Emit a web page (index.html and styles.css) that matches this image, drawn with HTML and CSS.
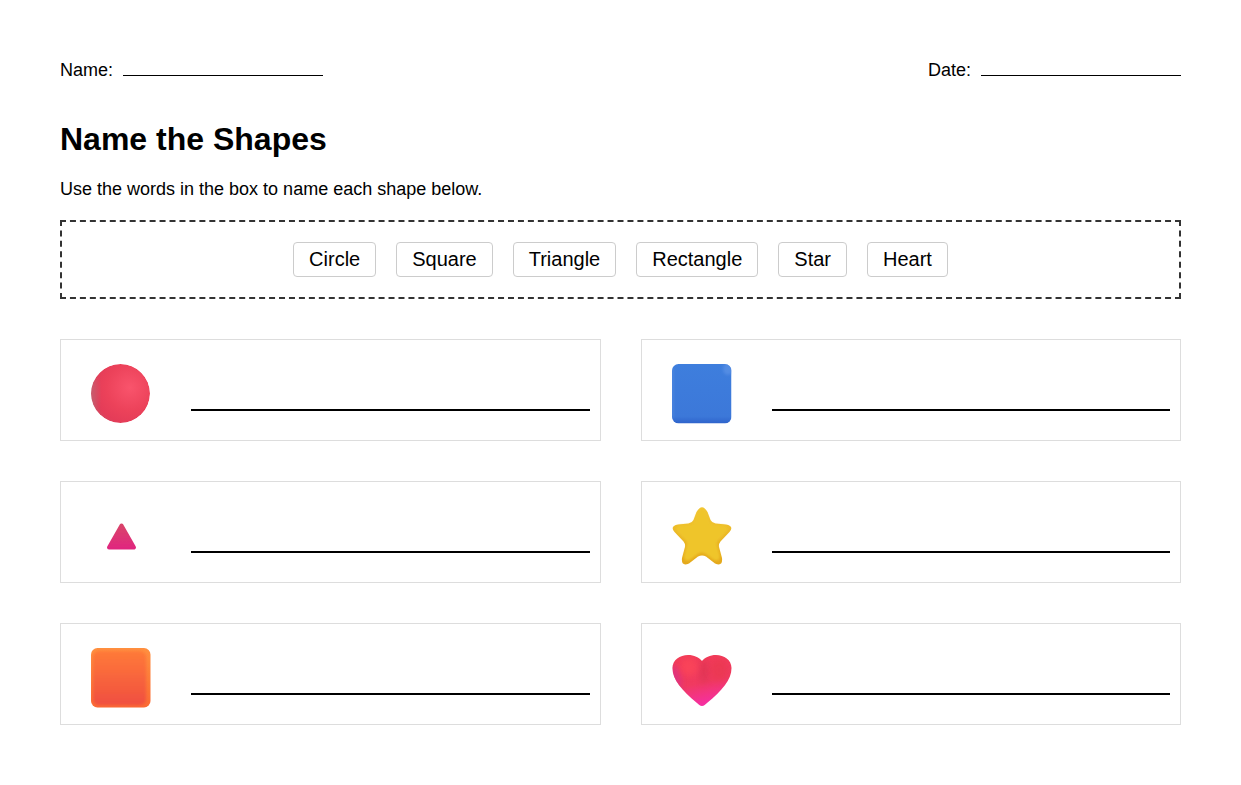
FILE: index.html
```html
<!DOCTYPE html>
<html lang="en">
<head>
<meta charset="utf-8">
<title>Name the Shapes</title>
<link rel="stylesheet" href="styles.css">
</head>
<body>
<svg class="defs" width="0" height="0" aria-hidden="true">
  <defs>
    <filter id="soft" x="-20%" y="-20%" width="140%" height="140%"><feGaussianBlur stdDeviation="0.4"/></filter>
    <filter id="soft2" x="-20%" y="-20%" width="140%" height="140%"><feGaussianBlur stdDeviation="1"/></filter>
    <filter id="blur3" x="-40%" y="-40%" width="180%" height="180%"><feGaussianBlur stdDeviation="3"/></filter>
    <filter id="blur1" x="-30%" y="-30%" width="160%" height="160%"><feGaussianBlur stdDeviation="1.5"/></filter>
    <radialGradient id="ball" cx="0.66" cy="0.4" r="0.72">
      <stop offset="0" stop-color="#f9546c"/>
      <stop offset="0.55" stop-color="#ec425a"/>
      <stop offset="0.85" stop-color="#e43c58"/>
      <stop offset="1" stop-color="#d24a62"/>
    </radialGradient>
    <linearGradient id="blue" x1="0" y1="0" x2="0" y2="1">
      <stop offset="0" stop-color="#3e7edd"/>
      <stop offset="0.88" stop-color="#3c78d9"/>
      <stop offset="1" stop-color="#2e63cb"/>
    </linearGradient>
    <linearGradient id="tri" x1="0" y1="0" x2="0" y2="1">
      <stop offset="0" stop-color="#d9436a"/>
      <stop offset="1" stop-color="#e0287e"/>
    </linearGradient>
    <linearGradient id="starEdge" x1="0" y1="0" x2="0" y2="1">
      <stop offset="0" stop-color="#f2c634"/>
      <stop offset="1" stop-color="#e4a81a"/>
    </linearGradient>
    <linearGradient id="orange" x1="0" y1="0" x2="0" y2="1">
      <stop offset="0" stop-color="#ff9040"/>
      <stop offset="1" stop-color="#fb6a34"/>
    </linearGradient>
    <linearGradient id="orangeIn" x1="0" y1="0" x2="0" y2="1">
      <stop offset="0" stop-color="#ff7a38"/>
      <stop offset="1" stop-color="#f04e40"/>
    </linearGradient>
    <linearGradient id="heart" x1="0.3" y1="0" x2="0.55" y2="1">
      <stop offset="0" stop-color="#f23c58"/>
      <stop offset="0.55" stop-color="#f03a60"/>
      <stop offset="1" stop-color="#f62ea6"/>
    </linearGradient>
    <path id="heartShape" d="M30 58C28 58 26.500 56.500 25 55C10 42.500 0.500 32 0.500 20C0.500 12 8 7 16 7C22 7 27 9.500 30 13C33 9.500 38 7 44 7C52 7 59.500 12 59.500 20C59.500 32 50 42.500 35 55C33.500 56.500 32 58 30 58Z"/>
    <path id="starShape" d="M24.500 6Q30 -3.500 35.500 6L38.500 14Q40 17 43.500 17.500L54 18.500Q62.500 20 57.500 26L48.500 35.500Q46.500 38 47 41L50 52Q51 61 43 57.500L34 50.500Q30 48.500 26 50.500L17 57.500Q9 61 10 52L13 41Q13.500 38 11.500 35.500L2.500 26Q-2.500 20 6 18.500L16.500 17.500Q20 17 21.500 14Z"/>
    <clipPath id="heartClip"><use href="#heartShape"/></clipPath>
    <clipPath id="blueClip"><rect width="59.500" height="59.500" rx="6.500"/></clipPath>
    <clipPath id="ballClip"><circle cx="29.500" cy="29.500" r="29.500"/></clipPath>
  </defs>
</svg>

<main class="sheet">
  <header class="meta">
    <div class="field"><span>Name:</span><span class="blank"></span></div>
    <div class="field"><span>Date:</span><span class="blank"></span></div>
  </header>

  <h1 class="title">Name the Shapes</h1>
  <p class="lead">Use the words in the box to name each shape below.</p>

  <ul class="bank">
    <li class="chip">Circle</li>
    <li class="chip">Square</li>
    <li class="chip">Triangle</li>
    <li class="chip">Rectangle</li>
    <li class="chip">Star</li>
    <li class="chip">Heart</li>
  </ul>

  <section class="grid">
    <article class="card">
      <svg class="shape" viewBox="0 0 60 60" aria-label="Red circle" role="img">
        <g clip-path="url(#ballClip)">
          <circle cx="29.500" cy="29.500" r="29.500" fill="url(#ball)"/>
          <ellipse cx="1" cy="30" rx="5" ry="20" fill="#b8707c" opacity="0.6" filter="url(#blur3)"/>
        </g>
      </svg>
      <span class="answer"></span>
    </article>

    <article class="card">
      <svg class="shape" viewBox="0 0 60 60" aria-label="Blue square" role="img">
        <g clip-path="url(#blueClip)">
          <rect width="59.500" height="59.500" fill="url(#blue)"/>
          <ellipse cx="56" cy="5" rx="5" ry="6" fill="#6a9cea" opacity="0.5" filter="url(#blur1)"/>
          <rect x="-1.500" y="4" width="3" height="50" fill="#5a92e6" opacity="0.5" filter="url(#blur1)"/>
        </g>
      </svg>
      <span class="answer"></span>
    </article>

    <article class="card">
      <svg class="shape" viewBox="0 0 60 60" aria-label="Pink triangle" role="img">
        <path d="M30.500 19.500L43 41.500H18Z" fill="url(#tri)" stroke="url(#tri)" stroke-width="4" stroke-linejoin="round" filter="url(#soft)"/>
      </svg>
      <span class="answer"></span>
    </article>

    <article class="card">
      <svg class="shape" viewBox="0 0 60 60" aria-label="Yellow star" role="img">
        <use href="#starShape" fill="url(#starEdge)" filter="url(#soft)"/>
        <use href="#starShape" fill="#efc52c" transform="translate(3.500 3) scale(0.88)" filter="url(#soft2)"/>
      </svg>
      <span class="answer"></span>
    </article>

    <article class="card">
      <svg class="shape" viewBox="0 0 60 60" aria-label="Orange rectangle" role="img">
        <rect width="59.500" height="59.500" rx="6.500" fill="url(#orange)"/>
        <rect x="2" y="3" width="53" height="54" rx="6" fill="url(#orangeIn)" filter="url(#blur1)"/>
      </svg>
      <span class="answer"></span>
    </article>

    <article class="card">
      <svg class="shape" viewBox="0 0 60 60" aria-label="Pink heart" role="img">
        <use href="#heartShape" fill="url(#heart)"/>
        <g clip-path="url(#heartClip)">
          <ellipse cx="2" cy="34" rx="7" ry="16" fill="#d8308e" opacity="0.7" filter="url(#blur3)"/>
          <ellipse cx="32" cy="24" rx="4" ry="12" fill="#d03050" opacity="0.5" filter="url(#blur3)"/>
          <ellipse cx="17" cy="19" rx="9" ry="9" fill="#ff4a58" opacity="0.6" filter="url(#blur3)"/>
          <ellipse cx="47" cy="22" rx="9" ry="11" fill="#e8384e" opacity="0.6" filter="url(#blur3)"/>
        </g>
      </svg>
      <span class="answer"></span>
    </article>
  </section>
</main>
</body>
</html>
```

FILE: styles.css
```css
* {
  box-sizing: border-box;
}

html,
body {
  margin: 0;
  padding: 0;
  background: #fff;
}

body {
  font-family: "Liberation Sans", Arial, sans-serif;
  color: #000;
}

.defs {
  display: block;
  height: 0;
}

.sheet {
  padding: 60px;
}

.meta {
  display: flex;
  justify-content: space-between;
  font-size: 18px;
  line-height: 21px;
}

.field {
  display: flex;
  align-items: flex-end;
}

.blank {
  display: block;
  width: 200px;
  height: 1px;
  margin-left: 10px;
  margin-bottom: 5px;
  background: #000;
}

.title {
  margin: 40px 0 21px;
  font-size: 32px;
  line-height: 37px;
  font-weight: 700;
}

.lead {
  margin: 0 0 20px;
  font-size: 18px;
  line-height: 21px;
}

.bank {
  display: flex;
  justify-content: center;
  gap: 20px;
  margin: 0 0 40px;
  padding: 20px;
  list-style: none;
  border: 2px dashed #333;
}

.chip {
  padding: 5px 15px;
  font-size: 20px;
  line-height: 23px;
  background: #fff;
  border: 1px solid #ccc;
  border-radius: 4px;
}

.grid {
  display: grid;
  grid-template-columns: 1fr 1fr;
  gap: 40px;
}

.card {
  display: flex;
  align-items: flex-end;
  gap: 40px;
  height: 102px;
  padding: 24px 10px 16px 30px;
  border: 1px solid #ddd;
}

.shape {
  display: block;
  flex: none;
  width: 60px;
  height: 60px;
}

.answer {
  display: block;
  flex: 1;
  height: 2px;
  margin-bottom: 13px;
  background: #000;
}
```
